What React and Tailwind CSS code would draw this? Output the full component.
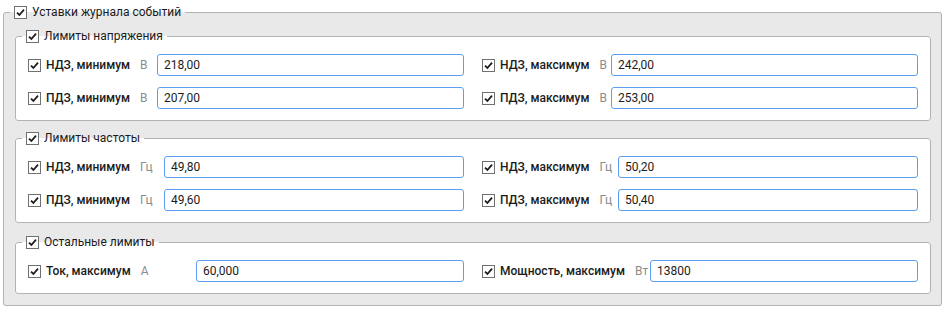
function Check() {
  return (
    <svg width="13" height="13" viewBox="0 0 13 13" className="shrink-0">
      <rect x="0.5" y="0.5" width="12" height="12" fill="#ffffff" stroke="#707070" />
      <path d="M3 6.6 L5.4 9 L10 3.6" stroke="#1e1e1e" strokeWidth="1.8" fill="none" />
    </svg>
  );
}

function Field({ label, unit, value, labelW }) {
  return (
    <div className="flex items-center h-[22px]">
      <div className={"flex items-center shrink-0 whitespace-nowrap " + labelW}>
        <Check />
        <span className="ml-[5px] font-medium text-[#1b1b1b]">{label}</span>
        <span className="ml-[10px] text-[#8c8c8c]">{unit}</span>
      </div>
      <div className="flex-1 h-[22px] border border-[#5d9ef3] rounded-[3px] bg-white flex items-center px-[6px] text-[#1b1b1b]">
        {value}
      </div>
    </div>
  );
}

function Group({ title, children, className }) {
  return (
    <fieldset className={"border border-[#b3b3b3] rounded-[3px] bg-white px-[12px] pt-[10px] pb-[11px] " + className}>
      <legend className="ml-[-6px] px-[4px] h-[16px] flex items-center gap-[5px] text-[#1b1b1b] whitespace-nowrap">
        <Check />
        <span>{title}</span>
      </legend>
      <div className="grid grid-cols-2 gap-x-[18px] gap-y-[11px]">{children}</div>
    </fieldset>
  );
}

export default function App() {
  return (
    <div className="w-[947px] h-[310px] bg-white pt-[4px] pl-[3px] pr-[5px] text-[12px] leading-none" style={{ fontFamily: 'Roboto, "Noto Sans", sans-serif' }}>
      <fieldset className="border border-[#b3b3b3] rounded-[3px] bg-[#e9e9e9] pl-[11px] pr-[10px] pt-[8px] pb-[11px] flex flex-col gap-[9px]">
        <legend className="ml-[-5px] px-[4px] h-[16px] flex items-center gap-[5px] text-[#1b1b1b] whitespace-nowrap">
          <Check />
          <span>Уставки журнала событий</span>
        </legend>
        <Group title="Лимиты напряжения">
          <Field label="НДЗ, минимум" unit="В" value="218,00" labelW="w-[129px]" />
          <Field label="НДЗ, максимум" unit="В" value="242,00" labelW="w-[129px]" />
          <Field label="ПДЗ, минимум" unit="В" value="207,00" labelW="w-[129px]" />
          <Field label="ПДЗ, максимум" unit="В" value="253,00" labelW="w-[129px]" />
        </Group>
        <Group title="Лимиты частоты">
          <Field label="НДЗ, минимум" unit="Гц" value="49,80" labelW="w-[136px]" />
          <Field label="НДЗ, максимум" unit="Гц" value="50,20" labelW="w-[136px]" />
          <Field label="ПДЗ, минимум" unit="Гц" value="49,60" labelW="w-[136px]" />
          <Field label="ПДЗ, максимум" unit="Гц" value="50,40" labelW="w-[136px]" />
        </Group>
        <Group title="Остальные лимиты" className="mt-[2px]">
          <Field label="Ток, максимум" unit="А" value="60,000" labelW="w-[168px]" />
          <Field label="Мощность, максимум" unit="Вт" value="13800" labelW="w-[168px]" />
        </Group>
      </fieldset>
    </div>
  );
}
